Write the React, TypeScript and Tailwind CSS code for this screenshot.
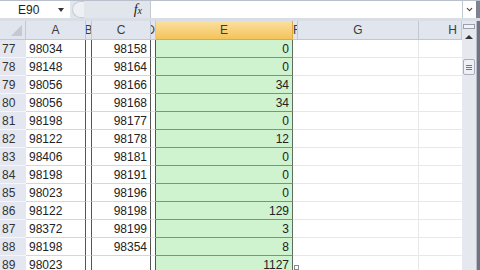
import { ChevronDown } from 'lucide-react'

const rows: [number, string, string, string][] = [
  [77, '98034', '98158', '0'],
  [78, '98148', '98164', '0'],
  [79, '98056', '98166', '34'],
  [80, '98056', '98168', '34'],
  [81, '98198', '98177', '0'],
  [82, '98122', '98178', '12'],
  [83, '98406', '98181', '0'],
  [84, '98198', '98191', '0'],
  [85, '98023', '98196', '0'],
  [86, '98122', '98198', '129'],
  [87, '98372', '98199', '3'],
  [88, '98198', '98354', '8'],
  [89, '98023', '', '1127'],
]

const cols = 'grid grid-cols-[26px_60px_6px_59px_5px_137px_5px_121px_43px]'

function FormulaBar() {
  return (
    <div className="flex h-[21px] border-t border-[#b9c0cb] bg-[#d9dee6] pb-[3px]">
      {/* Name box */}
      <div className="flex w-[70px] items-center justify-between bg-white pl-[18px] pr-[6px]">
        <span className="text-[12px] text-[#222]">E90</span>
        <span className="h-0 w-0 border-x-[3px] border-t-[4px] border-x-transparent border-t-[#333]" />
      </div>
      {/* Function area */}
      <div className="flex w-[80px] items-center bg-[#e1e5ec] pr-[8px]">
        <div className="ml-[2px] h-[17px] w-[12px] rounded-l-full border border-r-0 border-[#c8cdd6] bg-[#eef0f4]" />
        <span className="ml-auto font-['Liberation_Serif',serif] text-[14px] italic text-[#222]">
          f<span className="text-[10px]">x</span>
        </span>
      </div>
      {/* Formula input */}
      <div className="flex-1 border-l border-[#c3c9d3] bg-white" />
      <div className="flex w-[14px] items-center justify-center border-l border-[#c3c9d3] bg-white">
        <ChevronDown size={9} strokeWidth={3} className="text-[#444]" />
      </div>
      <div className="w-[4px] bg-[#7d8390]" />
    </div>
  )
}

function HeaderRow() {
  const h = 'flex items-center justify-center overflow-hidden border-r border-b border-[#c2c8d3] bg-[#e1e5ee] text-[12px] text-[#3c3c3c]'
  return (
    <div className={`${cols} h-[19px]`}>
      <div className={`${h} items-end justify-end pr-[3px] pb-[3px]`}>
        <svg width="11" height="11" viewBox="0 0 11 11">
          <polygon points="11,0 11,11 0,11" fill="#c3c8d1" />
        </svg>
      </div>
      <div className={h}>A</div>
      <div className={h}>B</div>
      <div className={h}>C</div>
      <div className={`${h} justify-end`}>D</div>
      <div className="flex items-center justify-center border-r border-b border-[#e2a83c] bg-gradient-to-b from-[#fbe0a0] to-[#f4c358] text-[12px] text-[#3c3c3c]">
        E
      </div>
      <div className={`${h} justify-start`}>F</div>
      <div className={h}>G</div>
      <div className={`${h} justify-end pr-[4px]`}>H</div>
    </div>
  )
}

function DataRow({ r }: { r: [number, string, string, string] }) {
  const [n, a, c, e] = r
  return (
    <div className={`${cols} h-[18px] text-[12px] leading-[15px] text-[#222] [&>div]:pt-[2px]`}>
      <div className="border-b border-[#f4f6fa] bg-[#e4e7ef] pl-[2px] text-[#333]">{n}</div>
      <div className="border-r border-b border-r-[#555] border-b-[#d6d6d6] bg-white pl-[3px]">{a}</div>
      <div className="border-r border-b border-r-[#555] border-b-[#e4e4e4] bg-white" />
      <div className="border-r border-b border-r-[#555] border-b-[#d6d6d6] bg-white pr-[3px] text-right">{c}</div>
      <div className="border-r border-b border-r-[#555] border-b-[#e4e4e4] bg-white" />
      <div className="relative border-r border-b border-r-[#5f6f5f] border-b-[#7f927f] bg-[#cff3cf] pr-[3px] text-right">
        {e}
      </div>
      <div className="relative border-b border-[#e6e6e6] bg-white">
        {n === 89 && (
          <span className="absolute top-[9px] left-[1px] h-[5px] w-[5px] border border-[#8a8a8a] bg-white" />
        )}
      </div>
      <div className="border-r border-b border-[#e8e8e8] bg-white" />
      <div className="border-b border-[#e8e8e8] bg-white" />
    </div>
  )
}

function ScrollBar() {
  return (
    <div className="flex w-[18px]">
      <div className="flex w-[14px] flex-col items-center bg-[#e6e8f0]">
        <div className="mt-[3px] h-[5px] w-[12px] border border-[#9aa1ad] bg-[#f2f3f7]" />
        <div className="mt-[6px] h-0 w-0 border-x-[4px] border-b-[4px] border-x-transparent border-b-[#333]" />
        <div className="mt-[20px] flex h-[16px] w-[12px] flex-col items-center justify-center gap-[1px] rounded-[2px] border border-[#a9aebb] bg-[#eef0f5]">
          <span className="h-px w-[6px] bg-[#777]" />
          <span className="h-px w-[6px] bg-[#777]" />
          <span className="h-px w-[6px] bg-[#777]" />
        </div>
      </div>
      <div className="w-[1px] bg-[#b8bcc6]" />
      <div className="w-[3px] bg-[#6f7480]" />
    </div>
  )
}

export default function App() {
  return (
    <div className="flex h-[270px] w-[480px] flex-col overflow-hidden bg-white font-['Liberation_Sans',Arial,sans-serif]">
      <FormulaBar />
      <div className="flex flex-1 overflow-hidden">
        <div className="w-[462px]">
          <HeaderRow />
          {rows.map((r) => (
            <DataRow key={r[0]} r={r} />
          ))}
        </div>
        <ScrollBar />
      </div>
    </div>
  )
}
